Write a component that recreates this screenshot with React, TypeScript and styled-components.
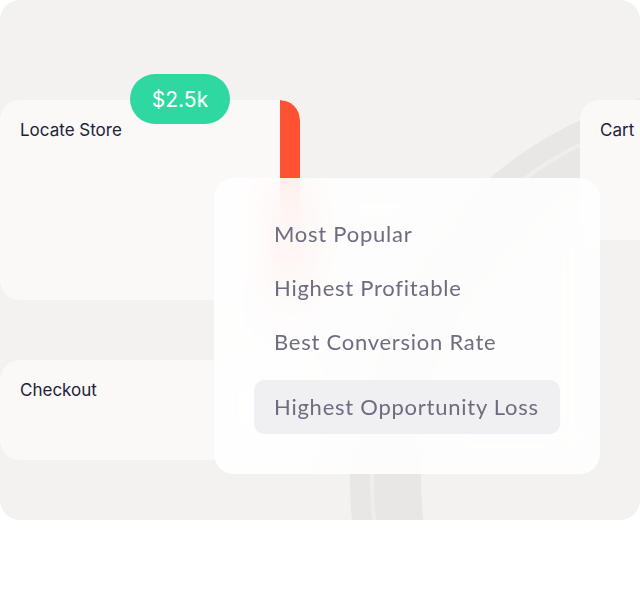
import styled, { createGlobalStyle } from 'styled-components';

const MENU_ITEMS = ['Most Popular', 'Highest Profitable', 'Best Conversion Rate', 'Highest Opportunity Loss'];
const ACTIVE_ITEM = 'Highest Opportunity Loss';

const GlobalStyle = createGlobalStyle`
    body {
        margin: 0;
        background: #ffffff;
        font-family: 'Inter', 'Liberation Sans', sans-serif;
    }
`;

export default function App() {
    return (
        <>
            <GlobalStyle />
            <Canvas>
                <Swoosh width="640" height="520" viewBox="0 0 640 520">
                    <circle cx="746" cy="480" r="360.5" fill="none" stroke="#e8e7e5" strokeWidth="71" />
                    <circle cx="746" cy="480" r="374" fill="none" stroke="#efeeec" strokeWidth="4" />
                </Swoosh>
                <Board>
                    <StoreCard>
                        <CardBody>
                            <CardLabel>Locate Store</CardLabel>
                        </CardBody>
                        <Accent />
                    </StoreCard>
                    <Badge>$2.5k</Badge>
                    <CartCard>
                        <CardLabel>Cart</CardLabel>
                    </CartCard>
                    <CheckoutCard>
                        <CardLabel>Checkout</CardLabel>
                    </CheckoutCard>
                    <Menu>
                        {MENU_ITEMS.map((item) => (
                            <MenuItem key={item} $active={item === ACTIVE_ITEM}>
                                {item}
                            </MenuItem>
                        ))}
                    </Menu>
                </Board>
            </Canvas>
        </>
    );
}

const Canvas = styled.div`
    position: relative;
    width: 640px;
    height: 520px;
    background: #f3f2f1;
    border-radius: 20px;
    overflow: hidden;
`;

const Swoosh = styled.svg`
    position: absolute;
    inset: 0;
`;

const Board = styled.div`
    position: relative;
    display: grid;
    grid-template-columns: 130px 84px 16px 50px 20px 280px 20px 40px;
    grid-template-rows: 74px 26px 24px 54px 62px 60px 60px 100px 14px 46px;
    height: 100%;
`;

const Card = styled.div`
    background: #faf9f8;
    border-radius: 20px;
`;

const StoreCard = styled(Card)`
    grid-column: 1 / 6;
    grid-row: 3 / 7;
    display: flex;
    overflow: hidden;
`;

const CardBody = styled.div`
    flex: 1;
    padding: 20px;
`;

const Accent = styled.div`
    width: 20px;
    background: #ff5232;
    border-top-right-radius: 20px;
`;

const CartCard = styled(Card)`
    grid-column: 7 / 9;
    grid-row: 3 / 6;
    padding: 20px;
    border-radius: 20px 0 0 20px;
`;

const CheckoutCard = styled(Card)`
    grid-column: 1 / 6;
    grid-row: 8 / 9;
    padding: 20px;
`;

const CardLabel = styled.div`
    font-size: 17px;
    line-height: 20px;
    color: #22213a;
    white-space: nowrap;
`;

const Badge = styled.div`
    grid-column: 2 / 4;
    grid-row: 2 / 4;
    display: flex;
    align-items: center;
    justify-content: center;
    background: #2fd8a0;
    border-radius: 25px;
    color: #ffffff;
    font-size: 21px;
    z-index: 2;
`;

const Menu = styled.div`
    grid-column: 3 / 8;
    grid-row: 5 / 10;
    display: flex;
    flex-direction: column;
    padding: 29px 40px 40px;
    background: rgba(255, 255, 255, 0.86);
    backdrop-filter: blur(24px);
    border-radius: 20px;
    z-index: 1;
`;

const MenuItem = styled.div<{ $active: boolean }>`
    padding: 12px 20px;
    margin-top: ${({ $active }) => ($active ? '11px' : '0')};
    font-family: 'Lato', 'Liberation Sans', sans-serif;
    font-size: 22px;
    line-height: 30px;
    letter-spacing: 0.75px;
    color: #6d6c80;
    background: ${({ $active }) => ($active ? '#f0f0f3' : 'transparent')};
    border-radius: 10px;
    white-space: nowrap;
`;
